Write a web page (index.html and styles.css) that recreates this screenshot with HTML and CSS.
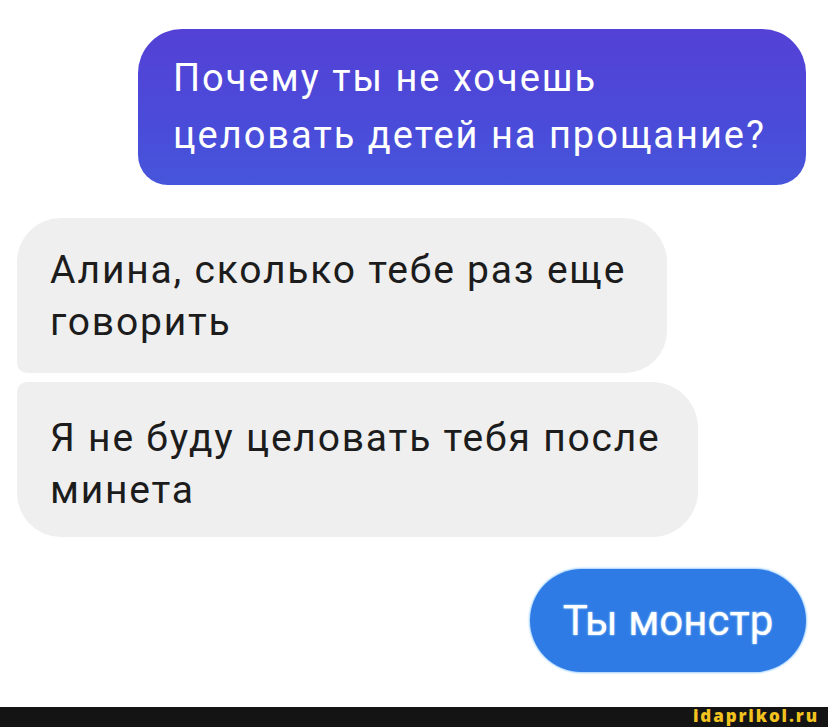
FILE: index.html
```html
<!DOCTYPE html>
<html lang="ru">
<head>
  <meta charset="UTF-8" />
  <meta name="viewport" content="width=device-width, initial-scale=1.0"/>
  <title>Чат</title>
  <link rel="stylesheet" href="styles.css">
</head>
<body>
  <div class="chat">
    <div class="bubble bubble-mine bubble-purple">
      <p>Почему ты не хочешь<br>целовать детей на прощание?</p>
    </div>
    <div class="bubble bubble-theirs bubble-first">
      <p>Алина, сколько тебе раз еще<br>говорить</p>
    </div>
    <div class="bubble bubble-theirs bubble-last">
      <p>Я не буду целовать тебя после<br>минета</p>
    </div>
    <div class="bubble bubble-mine bubble-blue">
      <p>Ты монстр</p>
    </div>
  </div>
  <div class="watermark">
    <span>idaprikol.ru</span>
  </div>
</body>
</html>
```

FILE: styles.css
```css
body {
  margin: 0;
  padding: 0;
  background: #fff;
  font-family: Roboto, "Liberation Sans", sans-serif;
  height: 727px;
  display: flex;
  flex-direction: column;
  overflow: hidden;
}
.chat {
  flex: 1;
  display: flex;
  flex-direction: column;
  padding-top: 29px;
}
.bubble {
  box-sizing: border-box;
}
.bubble p {
  margin: 0;
}
.bubble-mine {
  align-self: flex-end;
  margin-right: 22px;
  color: #fff;
}
.bubble-theirs {
  align-self: flex-start;
  margin-left: 17px;
  background-color: #efefef;
  color: #1c1c1c;
  font-size: 39px;
  line-height: 52px;
  letter-spacing: 1.8px;
  padding-left: 33px;
}
.bubble-purple {
  width: 668px;
  height: 156px;
  padding: 21px 0 0 35px;
  border-radius: 44px 44px 30px 30px;
  background: linear-gradient(180deg, #5441d6 0%, #4a4bd9 60%, #4656db 100%);
  font-size: 38px;
  line-height: 57px;
  letter-spacing: 2px;
}
.bubble-first {
  margin-top: 33px;
  width: 650px;
  height: 155px;
  padding-top: 26px;
  border-radius: 44px 44px 42px 10px;
}
.bubble-last {
  margin-top: 9px;
  width: 681px;
  height: 155px;
  padding-top: 30px;
  border-radius: 10px 46px 46px 44px;
}
.bubble-blue {
  margin-top: 32px;
  width: 276px;
  height: 103px;
  border-radius: 52px;
  background-color: #2e7be5;
  box-shadow: 0 0 2px 1px #9fd0ff;
  display: flex;
  align-items: center;
  justify-content: center;
  font-size: 42px;
  text-shadow: 0 0 2px #cfefff;
}
.watermark {
  height: 20px;
  background-color: #141414;
  display: flex;
  justify-content: flex-end;
  align-items: flex-start;
  padding-right: 9px;
}
.watermark span {
  font-family: "Open Sans", sans-serif;
  font-weight: 800;
  font-size: 17px;
  line-height: 17px;
  color: #f2c31f;
  letter-spacing: 1.9px;
}
```
